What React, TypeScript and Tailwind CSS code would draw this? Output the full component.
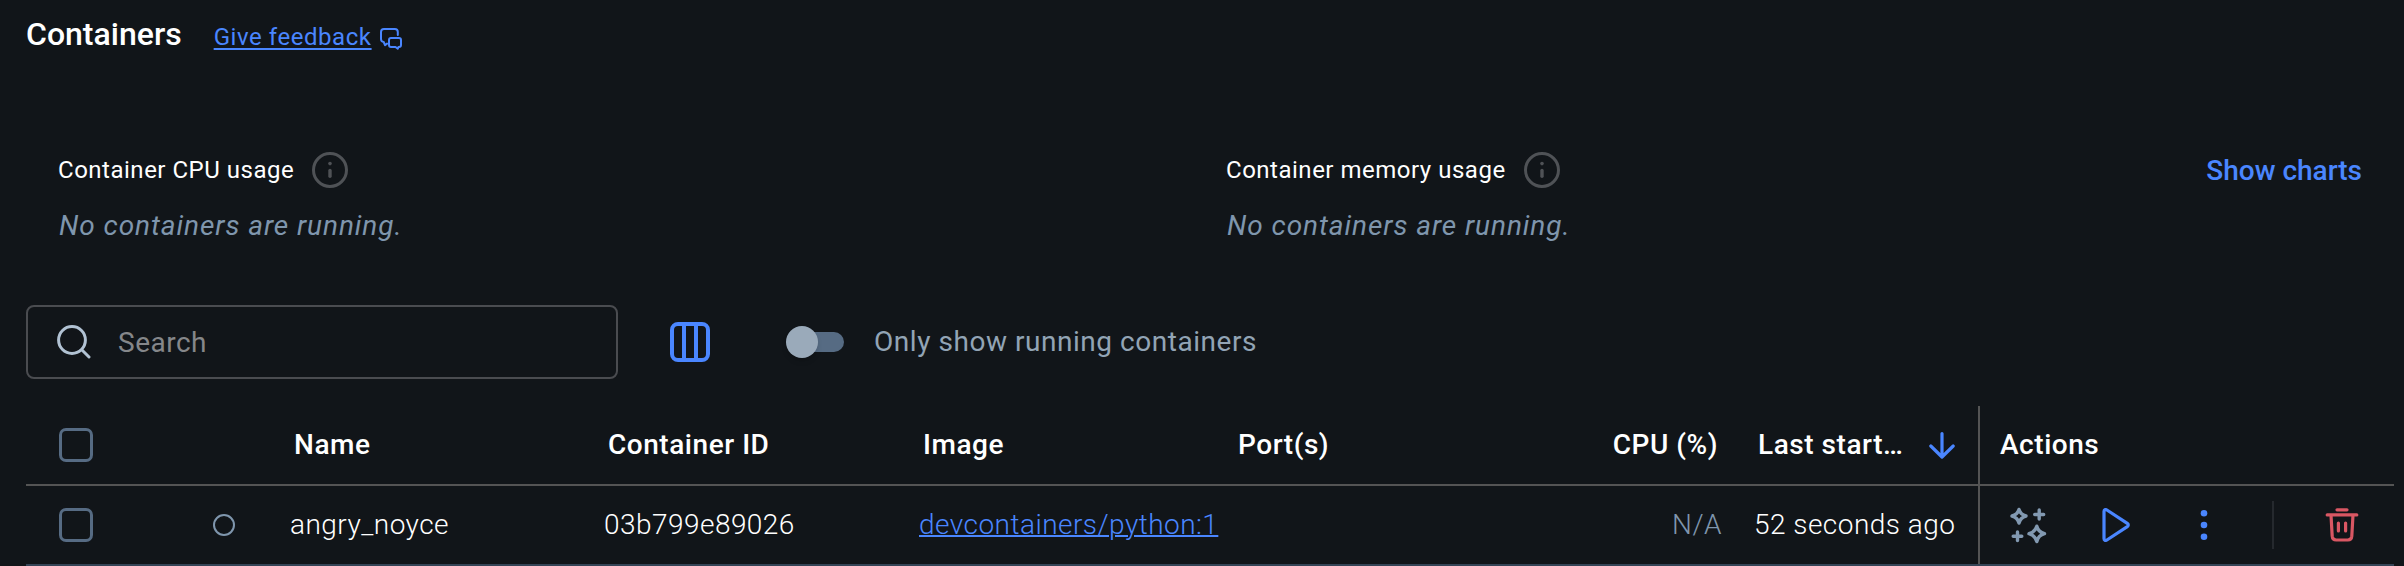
import React from 'react';

const InfoIcon = () => (
  <svg className="size-9 shrink-0" viewBox="0 0 36 36" fill="none" stroke="#4f5256" strokeWidth="3">
    <circle cx="18" cy="18" r="16.5" />
    <path d="M18 18.4v5.8" strokeLinecap="round" strokeWidth="3.4" />
    <circle cx="18" cy="11.6" r="1.8" fill="#4f5256" stroke="none" />
  </svg>
);

const FeedbackIcon = () => (
  <svg className="mt-[6px] ml-[8px] h-[22px] w-[22px]" viewBox="0 0 22 22" fill="none" stroke="#4a86ff" strokeWidth="2" strokeLinejoin="round" strokeLinecap="round">
    <path d="M17.800 7V4a3 3 0 0 0-3-3H4a3 3 0 0 0-3 3v7a3 3 0 0 0 2.700 3L5 17.200L7 15.600" />
    <path d="M11 10h8a2 2 0 0 1 2 2v5a2 2 0 0 1-2 2h-.6l-.6 1.800L15.500 19H11a2 2 0 0 1-2-2v-5a2 2 0 0 1 2-2z" />
  </svg>
);

const SearchIcon = () => (
  <svg className="size-[34px]" viewBox="0 0 34 34" fill="none" stroke="#b1c2d3" strokeWidth="3" strokeLinecap="round">
    <circle cx="15" cy="15" r="13.4" />
    <path d="M25 25l7 7" />
  </svg>
);

const ColumnsIcon = () => (
  <svg className="size-10" viewBox="0 0 40 40" fill="none" stroke="#4a86ff" strokeWidth="4">
    <rect x="2" y="2" width="36" height="36" rx="6" />
    <path d="M14 2v36M26 2v36" />
  </svg>
);

const ArrowDown = () => (
  <svg className="h-[27px] w-[26px]" viewBox="0 0 26 27" fill="none" stroke="#4a86ff" strokeWidth="3.2" strokeLinecap="round" strokeLinejoin="round">
    <path d="M13 1.600v23M1.800 14l11.200 11l11.200-11" />
  </svg>
);

const SparklesIcon = () => (
  <svg className="h-[37px] w-[37px]" viewBox="0 0 37 37" fill="none" stroke="#8299b1" strokeWidth="3.4" strokeLinejoin="round" strokeLinecap="round">
    <path d="M9 2.500Q10.500 7.500 16 9Q10.500 10.500 9 16Q7.500 10.500 2 9Q7.500 7.500 9 2.500z" />
    <path d="M26.800 19.200Q28.300 25 34.500 26.700Q28.300 28.300 26.800 34.600Q25 28.300 19 26.700Q25 25 26.800 19.200z" />
    <path d="M29.200 3v9M24.700 7.500h9M7.500 25v8.600M3.200 29.200h8.600" />
  </svg>
);

const PlayIcon = () => (
  <svg className="h-[34px] w-7" viewBox="0 0 28 34" fill="none" stroke="#4a86ff" strokeWidth="3.2" strokeLinejoin="round">
    <path d="M2 3.500v27c0 1.700 1.500 2.400 2.900 1.500L25.300 18.600c1.300-.9 1.300-2.300 0-3.200L4.900 2C3.500 1.100 2 1.800 2 3.500z" />
  </svg>
);

const DotsIcon = () => (
  <svg className="h-[34px] w-2" viewBox="0 0 8 34" fill="#4a86ff">
    <circle cx="4" cy="5.300" r="3.300" />
    <circle cx="4" cy="17" r="3.300" />
    <circle cx="4" cy="28.700" r="3.300" />
  </svg>
);

const TrashIcon = () => (
  <svg className="size-[34px]" viewBox="0 0 34 34" fill="none" stroke="#d95763" strokeWidth="3.2" strokeLinecap="round" strokeLinejoin="round">
    <path d="M12 1.800h10M2.200 6.900h29.600M6 7l1.200 21.200q.3 3.800 4 3.800h11.600q3.700 0 4-3.800L28 7M13.400 15v8M20.600 15v8" />
  </svg>
);

const Usage = ({ title }: { title: string }) => (
  <div className="w-[1168px] shrink-0">
    <div className="flex h-9 items-center gap-[18px]">
      <span className="text-[24px] tracking-[0.51px] text-white">{title}</span>
      <InfoIcon />
    </div>
    <p className="mt-[18px] pl-px text-[28px] leading-[40px] tracking-[0.93px] text-[#7f96ad] italic">No containers are running.</p>
  </div>
);

const Checkbox = () => <span className="block size-[34px] rounded-[7px] border-[3px] border-[#566b83]" />;

const columns = 'grid grid-cols-[184px_79px_314px_315px_315px_300px_221px_224px_416px] items-center';

export default function App() {
  return (
    <div className="h-[566px] w-[2404px] overflow-hidden bg-[#111519] font-[Roboto,sans-serif] text-[28px] whitespace-nowrap">
      <header className="flex h-[72px] items-center pl-[26px]">
        <h1 className="-mt-[4px] text-[32px] font-medium text-white">Containers</h1>
        <a className="mt-[2px] ml-8 text-[24px] tracking-[0.56px] text-[#4a86ff] underline decoration-2 underline-offset-[3px]">Give feedback</a>
        <FeedbackIcon />
      </header>

      <section className="flex h-[233px] pt-20 pr-[42px] pl-[58px]">
        <Usage title="Container CPU usage" />
        <div className="min-w-0 flex-1">
          <Usage title="Container memory usage" />
        </div>
        <button className="h-9 shrink-0 leading-[37px] font-medium text-[#4a86ff]">Show charts</button>
      </section>

      <section className="flex h-[74px] items-center pl-[26px]">
        <div className="flex h-[74px] w-[592px] items-center gap-[27px] rounded-[8px] border-2 border-[#4a4c50] pl-[29px]">
          <SearchIcon />
          <span className="mt-[2px] tracking-[0.5px] text-[#85878a]">Search</span>
        </div>
        <div className="ml-[52px]">
          <ColumnsIcon />
        </div>
        <div className="ml-[76px] flex h-8 w-[58px] items-center">
          <span className="z-10 size-8 shrink-0 rounded-full bg-[#9aaaba] shadow-md" />
          <span className="-ml-3 h-5 flex-1 rounded-r-full bg-[#566b83]" />
        </div>
        <span className="ml-[30px] tracking-[0.54px] text-[#92a4b5]">Only show running containers</span>
      </section>

      <div className="mt-[27px] ml-[26px] w-[2368px]">
        <div className={`${columns} h-20 border-b-2 border-[#545454] font-medium tracking-[0.54px] text-white`}>
          <div className="pl-[33px]"><Checkbox /></div>
          <div />
          <div className="pl-[5px]">Name</div>
          <div className="pl-[5px]">Container ID</div>
          <div className="pl-[5px]">Image</div>
          <div className="pl-[5px]">Port(s)</div>
          <div className="pr-[36px] text-right">CPU (%)</div>
          <div className="flex items-center justify-between pr-[23px] pl-[4px]">
            Last start…
            <ArrowDown />
          </div>
          <div className="flex h-full items-center border-l-2 border-[#545454] pl-5">Actions</div>
        </div>
        <div className={`${columns} h-20 border-b-2 border-[#344456] font-light tracking-[0.46px] text-white`}>
          <div className="pl-[33px]"><Checkbox /></div>
          <div className="pl-[3px]"><span className="block size-[22px] rounded-full border-2 border-[#7f96ad]" /></div>
          <div className="pl-px">angry_noyce</div>
          <div className="pl-px">03b799e89026</div>
          <div className="pl-px"><a className="text-[#4a86ff] underline decoration-2">devcontainers/python:1</a></div>
          <div />
          <div className="pr-[32px] text-right text-[#7f96ad]">N/A</div>
          <div>52 seconds ago</div>
          <div className="flex h-full items-center border-l-2 border-[#545454] pl-[30px]">
            <SparklesIcon />
            <div className="ml-[55px]"><PlayIcon /></div>
            <div className="ml-[70px]"><DotsIcon /></div>
            <div className="ml-16 h-12 w-[2px] bg-[#25292e]" />
            <div className="ml-[51px]"><TrashIcon /></div>
          </div>
        </div>
      </div>
    </div>
  );
}
